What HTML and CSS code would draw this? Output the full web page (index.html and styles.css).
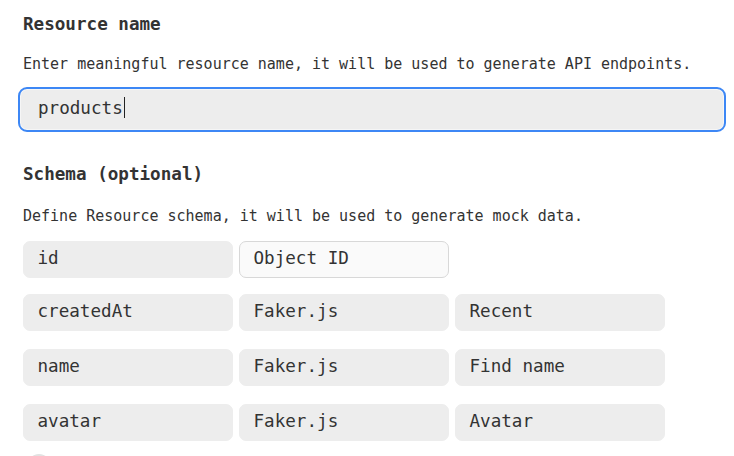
FILE: index.html
```html
<!DOCTYPE html>
<html lang="en">
<head>
<meta charset="utf-8">
<title>New resource</title>
<link rel="stylesheet" href="styles.css">
</head>
<body>
<main class="form">
  <h2 class="label label-first">Resource name</h2>
  <p class="hint hint-first">Enter meaningful resource name, it will be used to generate API endpoints.</p>
  <div class="input" role="textbox" aria-label="Resource name">products<span class="caret"></span></div>

  <h2 class="label label-second">Schema (optional)</h2>
  <p class="hint hint-second">Define Resource schema, it will be used to generate mock data.</p>

  <div class="schema">
    <div class="row row-first">
      <div class="cell">id</div>
      <div class="cell cell-outline">Object ID</div>
    </div>
    <div class="row">
      <div class="cell">createdAt</div>
      <div class="cell">Faker.js</div>
      <div class="cell">Recent</div>
    </div>
    <div class="row">
      <div class="cell">name</div>
      <div class="cell">Faker.js</div>
      <div class="cell">Find name</div>
    </div>
    <div class="row">
      <div class="cell">avatar</div>
      <div class="cell">Faker.js</div>
      <div class="cell">Avatar</div>
    </div>
  </div>
  <button class="add" aria-label="Add field"></button>
</main>
</body>
</html>
```

FILE: styles.css
```css
html, body {
  margin: 0;
  padding: 0;
  background: #ffffff;
  overflow: hidden;
}

body {
  font-family: "DejaVu Sans Mono", "Liberation Mono", monospace;
  color: #333333;
}

.form {
  display: flex;
  flex-direction: column;
  align-items: flex-start;
  padding: 12px 8px 0 23px;
}

.label {
  margin: 0;
  font-size: 17.6px;
  line-height: 24px;
  font-weight: bold;
  color: #333333;
}

.label-second {
  margin-top: 30px;
}

.hint {
  margin: 0;
  font-size: 15px;
  line-height: 20px;
  color: #333333;
}

.hint-first {
  margin-top: 17.5px;
}

.hint-second {
  margin-top: 20px;
}

.input {
  box-sizing: border-box;
  margin: 13.5px 0 0 -5px;
  width: 708px;
  height: 45px;
  border: 2.5px solid #3d87f5;
  border-radius: 9px;
  background: #ededed;
  box-shadow: inset 0 0 0 1px #f6f6f6;
  padding: 0 0 4px 18px;
  font-size: 17.6px;
  line-height: 34px;
  color: #333333;
  display: flex;
  align-items: center;
}

.caret {
  display: inline-block;
  width: 1px;
  height: 21px;
  margin-left: 1px;
  background: #222222;
}

.schema {
  display: flex;
  flex-direction: column;
  gap: 18px;
  margin-top: 14.5px;
}

.row {
  display: grid;
  grid-template-columns: repeat(3, 209.5px);
  column-gap: 6.5px;
}

.row-first {
  margin-bottom: -2px;
}

.cell {
  box-sizing: border-box;
  height: 37px;
  border: 1.5px solid #ededed;
  border-radius: 7px;
  background: #ededed;
  padding: 0 0 0 13.5px;
  font-size: 17.6px;
  line-height: 32px;
  color: #333333;
  white-space: nowrap;
}

.cell-outline {
  background: #fafafa;
  border-color: #d8d8d8;
}

.add {
  margin: 13px 0 0 4px;
  width: 24px;
  height: 24px;
  border: none;
  border-radius: 50%;
  background: #e2e2e2;
  padding: 0;
}
```
